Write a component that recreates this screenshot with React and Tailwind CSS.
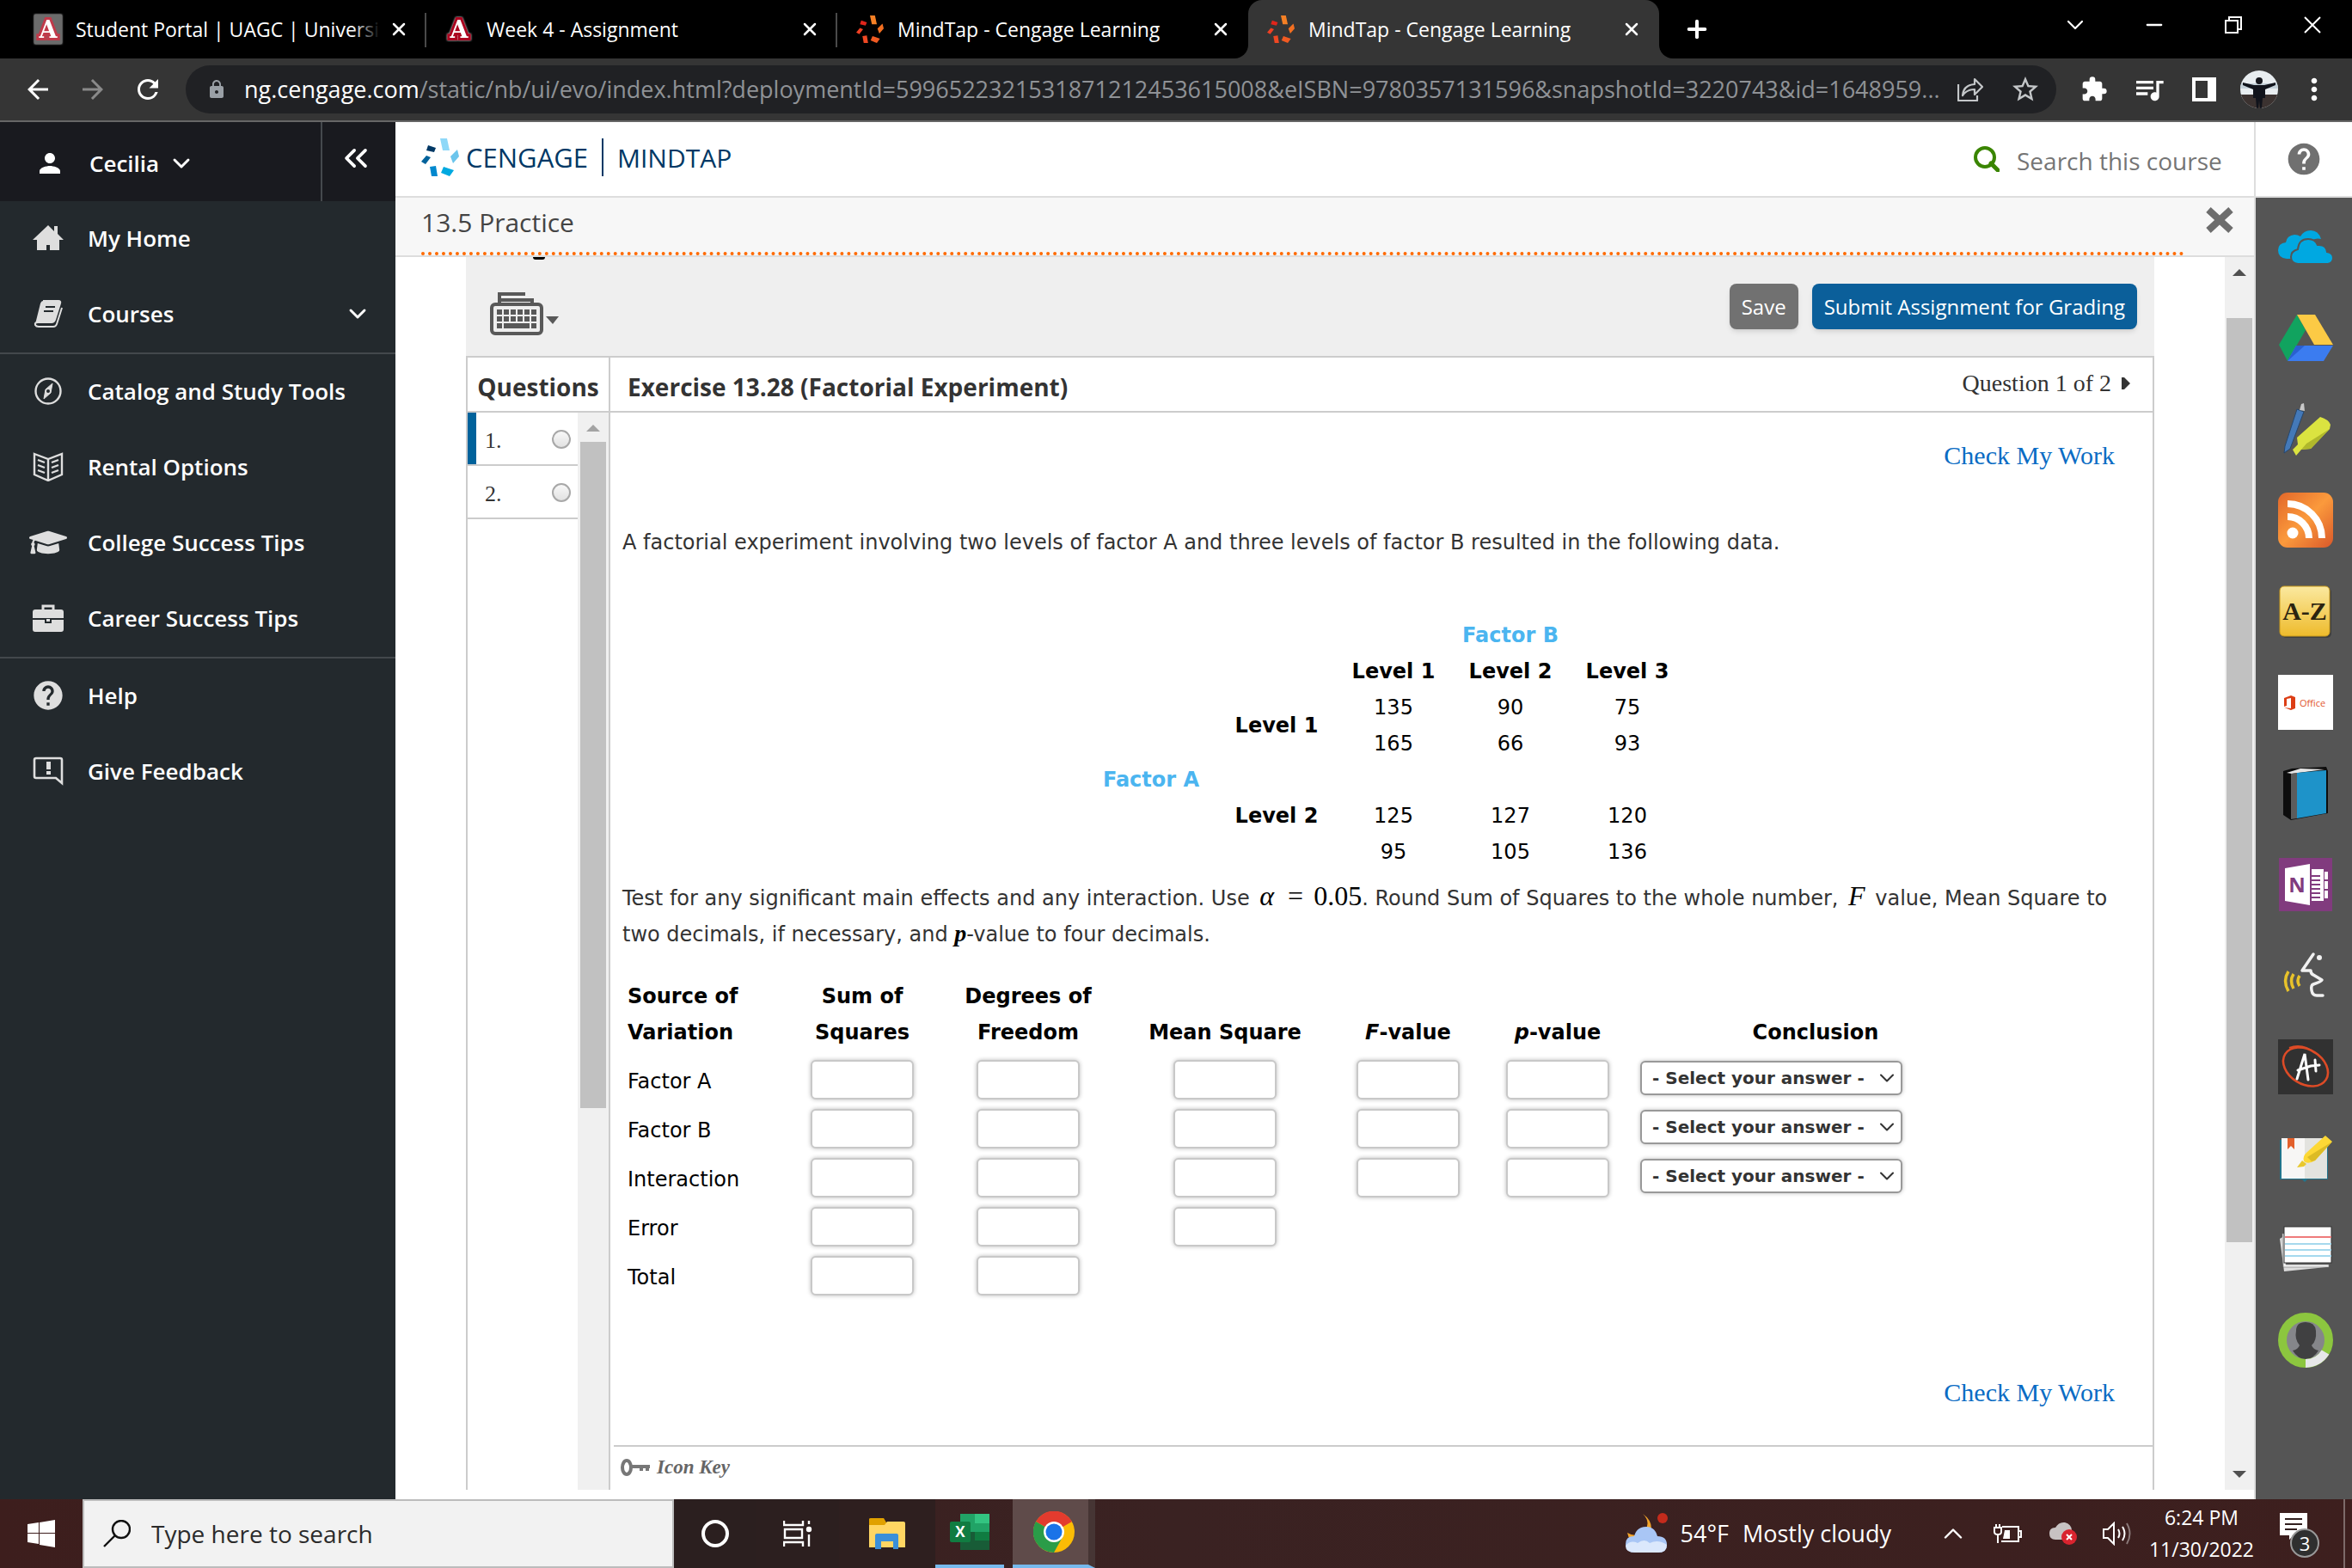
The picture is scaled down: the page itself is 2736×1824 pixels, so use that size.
import React from 'react';
import {
  MdArrowBack, MdArrowForward, MdRefresh, MdLock, MdExtension, MdQueueMusic,
  MdMoreVert, MdPerson, MdHelp, MdStarOutline,
} from 'react-icons/md';
import { FaGraduationCap } from 'react-icons/fa';
import { ChevronDown, ChevronUp, ChevronsLeft, X, Plus, Minus } from 'lucide-react';

/* ---------- Shared logos ---------- */

// Six-piece ring used by the Cengage brand, recoloured for the favicon
const CengageMark = ({ className, colors }) => (
  <svg viewBox="0 0 44 44" className={className} aria-hidden="true">
    <path d="M22 0h8l3 14h-8z" fill={colors[0]} />
    <path d="M34 21l8-8 2 8-7 8z" fill={colors[1]} />
    <path d="M26 33l12 4-5 7-10-4z" fill={colors[2]} />
    <path d="M10 33l7-1 2 12h-7z" fill={colors[3]} />
    <path d="M0 27l6-7 5 2-6 8z" fill={colors[4]} />
    <path d="M8 8l9 3-2 5-9-2z" fill={colors[5]} />
  </svg>
);

const BRAND_BLUE = ['#8ed8f8', '#6cc5ec', '#00a9e0', '#0088ce', '#00629b', '#003865'];
const BRAND_ORANGE = ['#f58025', '#f36f21', '#f05a22', '#ef4823', '#f04023', '#e0251b'];

const ArizonaIcon = ({ dim }) => (
  <svg viewBox="0 0 32 34" className="w-8 h-[34px] shrink-0 drop-shadow-[0_0_1px_white]" aria-hidden="true">
    {dim && <rect width="32" height="34" fill="#6b6b6b" />}
    <text
      x="16"
      y="27"
      textAnchor="middle"
      fontFamily="DejaVu Serif, serif"
      fontWeight="bold"
      fontSize="27"
      fill="#ffffff"
      stroke={dim ? '#c03a4a' : '#ab0520'}
      strokeWidth="6"
      paintOrder="stroke"
    >
      A
    </text>
  </svg>
);

/* ---------- Browser ---------- */

const TABS = [
  { title: 'Student Portal | UAGC | University', icon: 'uagc', dim: true },
  { title: 'Week 4 - Assignment', icon: 'uagc' },
  { title: 'MindTap - Cengage Learning', icon: 'cengage' },
  { title: 'MindTap - Cengage Learning', icon: 'cengage', active: true },
];

const BrowserTab = ({ tab, divider }) => (
  <div
    className={`relative flex items-center w-[478px] h-[68px] pl-[22px] pr-[18px] text-white ${
      tab.active ? 'bg-[#353535] rounded-t-2xl' : ''
    }`}
  >
    {tab.icon === 'uagc' ? (
      <ArizonaIcon dim={tab.dim} />
    ) : (
      <CengageMark className="size-8 shrink-0" colors={BRAND_ORANGE} />
    )}
    <span className="ml-4 flex-1 min-w-0 whitespace-nowrap text-[23px]">{tab.title}</span>
    {tab.dim && (
      <>
        <span className="absolute right-[54px] w-8 h-9 bg-linear-to-r from-transparent to-black" />
        <span className="absolute right-0 w-[54px] h-9 bg-black" />
      </>
    )}
    <button className="relative p-0.5" aria-label="Close tab">
      <X className="size-6" strokeWidth={2.5} />
    </button>
    {divider && <span className="absolute right-0 top-[15px] w-0.5 h-10 bg-[#4a4a4a]" />}
    {tab.active && (
      <>
        <span className="absolute -left-4 bottom-0 size-4 bg-[#353535]"><span className="block size-4 rounded-br-2xl bg-black" /></span>
        <span className="absolute -right-4 bottom-0 size-4 bg-[#353535]"><span className="block size-4 rounded-bl-2xl bg-black" /></span>
      </>
    )}
  </div>
);

const TabStrip = () => (
  <div className="flex h-[68px] bg-black pl-[18px] text-white">
    {TABS.map((tab, i) => (
      <BrowserTab key={i} tab={tab} divider={i < 2} />
    ))}
    <button className="ml-7 self-center" aria-label="New tab">
      <Plus className="size-8" strokeWidth={3} />
    </button>
    <div className="ml-auto flex h-[58px] items-center">
      <button className="w-[92px] flex justify-center" aria-label="Search tabs"><ChevronDown className="size-8" strokeWidth={1.6} /></button>
      <button className="w-[92px] flex justify-center" aria-label="Minimize"><Minus className="size-7" strokeWidth={2} /></button>
      <button className="w-[92px] flex justify-center" aria-label="Restore">
        <svg viewBox="0 0 20 20" className="size-5" fill="none" stroke="currentColor" strokeWidth="2">
          <path d="M1 5h14v14H1zM5 5V1h14v14h-4" />
        </svg>
      </button>
      <button className="w-[92px] flex justify-center" aria-label="Close">
        <svg viewBox="0 0 20 20" className="size-5" stroke="currentColor" strokeWidth="2">
          <path d="M1 1l18 18M19 1L1 19" />
        </svg>
      </button>
    </div>
  </div>
);

const Toolbar = () => (
  <div className="flex items-center h-[74px] bg-[#353535] border-b-2 border-[#666666] pl-3 text-white">
    <button className="w-16 flex justify-center" aria-label="Back"><MdArrowBack className="size-9" /></button>
    <button className="w-16 flex justify-center text-[#8a8a8a]" aria-label="Forward"><MdArrowForward className="size-9" /></button>
    <button className="w-16 flex justify-center" aria-label="Reload"><MdRefresh className="size-9" /></button>
    <div className="ml-3 flex flex-1 min-w-0 items-center h-14 rounded-full bg-[#202124] pl-6 pr-1">
      <MdLock className="size-6 text-[#9aa0a6] shrink-0" />
      <div role="textbox" aria-label="Address" className="ml-5 flex-1 min-w-0 whitespace-nowrap text-[27px] text-[#8f9296]">
        <span className="text-white">ng.cengage.com</span>/static/nb/ui/evo/index.html?deploymentId=5996522321531871212453615008&amp;eISBN=9780357131596&amp;snapshotId=3220743&amp;id=1648959...
      </div>
      <button className="w-16 flex justify-center" aria-label="Share">
        <svg viewBox="0 0 30 28" className="w-[30px] h-7" fill="none" stroke="#c4c7c9" strokeWidth="2.2" strokeLinejoin="round">
          <path d="M1 8v19h22v-6" />
          <path d="M6 21q1-12 14-13V2l9 9-9 9v-6q-9 0-14 7z" />
        </svg>
      </button>
      <button className="w-16 flex justify-center text-[#c4c7c9]" aria-label="Bookmark"><MdStarOutline className="size-9" /></button>
    </div>
    <div className="ml-3 mr-3 flex items-center">
      <button className="w-16 flex justify-center" aria-label="Extensions"><MdExtension className="size-8" /></button>
      <button className="w-16 flex justify-center" aria-label="Media"><MdQueueMusic className="size-10" /></button>
      <button className="w-16 flex justify-center" aria-label="Side panel">
        <svg viewBox="0 0 28 28" className="size-7"><path d="M0 0h28v28H0zM4 4v20h14V4z" fill="#fff" fillRule="evenodd" /></svg>
      </button>
      <button className="w-16 flex justify-center" aria-label="Profile">
        <svg viewBox="0 0 44 44" className="size-11 rounded-full">
          <rect width="44" height="44" fill="#e8edf0" />
          <rect y="15" width="44" height="6" fill="#c3d0d8" />
          <rect y="28" width="44" height="16" fill="#3b3230" />
          <circle cx="22" cy="12" r="4" fill="#14161c" />
          <path d="M3 14l13 3h12l13-3v3l-12 5v10h-3l-1 12h-2l-1-9-1 9h-2l-1-12h-3V22L3 17z" fill="#10131b" />
        </svg>
      </button>
      <button className="w-16 flex justify-center" aria-label="Menu"><MdMoreVert className="size-10" /></button>
    </div>
  </div>
);

/* ---------- Left navigation ---------- */

const IconHome = () => (
  <svg viewBox="0 0 36 32" className="w-9 h-8" fill="#dedede">
    <path d="M18 1l7 7V2h4v9l7 7h-5v12H20v-6h-4v6H5V18H0z" />
  </svg>
);

const IconCourses = () => (
  <svg viewBox="0 0 36 32" className="w-9 h-8">
    <path d="M12 1h18q3 0 2 3l-6 19q-1 3-4 3H6q-4 0-3 3 1 2 4 2h17q3 0 4-3l6-19" fill="none" stroke="#dedede" strokeWidth="2" />
    <path d="M12 1h18q3 0 2 3l-6 19q-1 3-4 3H6q-3 0-3 2L9 4q1-3 3-3z" fill="#dedede" />
    <path d="M15 8h11M13 13h11" stroke="#23292d" strokeWidth="2" />
  </svg>
);

const IconCompass = () => (
  <svg viewBox="0 0 32 32" className="size-8" fill="none" stroke="#dedede">
    <circle cx="16" cy="16" r="14.5" strokeWidth="2.4" />
    <path d="M21 7l-2 11-8 7 2-11z" fill="#dedede" />
    <circle cx="16" cy="16" r="2" fill="#23292d" stroke="none" />
  </svg>
);

const IconOpenBook = () => (
  <svg viewBox="0 0 36 34" className="w-9 h-[34px]" fill="none" stroke="#dedede" strokeWidth="2.4">
    <path d="M2 2l16 6 16-6v24l-16 7-16-7zM18 8v25" />
    <path d="M6 9l8 3M6 15l8 3M6 21l8 3M30 9l-8 3M30 15l-8 3M30 21l-8 3" />
  </svg>
);

const IconBriefcase = () => (
  <svg viewBox="0 0 36 32" className="w-9 h-8">
    <path d="M12 7V2h12v5" fill="none" stroke="#dedede" strokeWidth="3" />
    <path d="M3 6h30q3 0 3 3v7H0V9q0-3 3-3zM0 18h14v4h8v-4h14v11q0 3-3 3H3q-3 0-3-3z" fill="#dedede" />
    <rect x="16" y="17" width="4" height="3" fill="#dedede" />
  </svg>
);

const IconFeedback = () => (
  <svg viewBox="0 0 36 34" className="w-9 h-[34px]">
    <path d="M4 2h28q2 0 2 2v27l-7-6H4q-2 0-2-2V4q0-2 2-2z" fill="none" stroke="#dedede" strokeWidth="2.6" />
    <path d="M16 6h5v9h-5zM16 17h5v4h-5z" fill="#dedede" />
  </svg>
);

const NAV_GROUPS = [
  [
    { label: 'My Home', icon: <IconHome /> },
    { label: 'Courses', icon: <IconCourses />, expandable: true },
  ],
  [
    { label: 'Catalog and Study Tools', icon: <IconCompass /> },
    { label: 'Rental Options', icon: <IconOpenBook /> },
    { label: 'College Success Tips', icon: <FaGraduationCap className="size-11" /> },
    { label: 'Career Success Tips', icon: <IconBriefcase /> },
  ],
  [
    { label: 'Help', icon: <MdHelp className="size-10" /> },
    { label: 'Give Feedback', icon: <IconFeedback /> },
  ],
];

const Sidebar = () => (
  <aside className="w-[460px] shrink-0 bg-[#23292d] text-white text-[26px] font-semibold">
    <div className="flex h-[92px] bg-[#191a1f]">
      <button className="flex flex-1 items-center pl-10 pt-1 border-r-2 border-[#45494d]">
        <MdPerson className="size-9" />
        <span className="ml-7">Cecilia</span>
        <ChevronDown className="ml-2.5 size-8" strokeWidth={2.2} />
      </button>
      <button className="flex w-[85px] items-center justify-center pr-2 pb-2" aria-label="Collapse menu">
        <ChevronsLeft className="size-11" strokeWidth={2} />
      </button>
    </div>
    <nav>
      {NAV_GROUPS.map((group, i) => (
        <ul key={i} className={i > 0 ? 'border-t-2 border-[#43484c]' : ''}>
          {group.map((item) => (
            <li key={item.label}>
              <a href="#" className="flex items-center h-[88px] pr-7 pb-0.5">
                <span className="ml-[34px] w-11 flex justify-center text-[#dedede]">{item.icon}</span>
                <span className="ml-6 flex-1">{item.label}</span>
                {item.expandable && <ChevronDown className="size-8" strokeWidth={2.2} />}
              </a>
            </li>
          ))}
        </ul>
      ))}
    </nav>
  </aside>
);

/* ---------- Course header ---------- */

const CourseHeader = () => (
  <header className="flex h-[88px] bg-white border-b-2 border-[#dddddd]">
    <div className="flex flex-1 items-center pl-[30px] pr-4 pb-1 border-r-2 border-[#dddddd]">
      <CengageMark className="size-11" colors={BRAND_BLUE} />
      <span className="ml-2 text-[31px] text-[#003865]">CENGAGE</span>
      <span className="mx-4 w-0.5 h-11 bg-[#003865]" />
      <span className="text-[30px] text-[#003865]">MINDTAP</span>
      <label className="ml-auto flex items-center pt-1">
        <svg viewBox="0 0 30 30" className="size-[30px]" fill="none" stroke="#3a8500">
          <circle cx="13" cy="13" r="11" strokeWidth="4" />
          <path d="M20 20l8 8" strokeWidth="5" strokeLinecap="round" />
        </svg>
        <input
          type="text"
          aria-label="Search this course"
          placeholder="Search this course"
          className="ml-5 w-[260px] pt-1 text-[28px] placeholder:text-[#757575] outline-none"
        />
      </label>
    </div>
    <button className="flex w-28 items-center justify-center text-[#707070]" aria-label="Help">
      <MdHelp className="size-11" />
    </button>
  </header>
);

/* ---------- Assignment ---------- */

const KeyboardIcon = () => (
  <svg viewBox="0 0 82 52" className="w-[82px] h-[52px]">
    <path d="M11 13V3h30M11 10h38v6" fill="none" stroke="#595959" strokeWidth="4" />
    <rect x="2" y="15" width="58" height="34" rx="4" fill="none" stroke="#595959" strokeWidth="4" />
    {[0, 1, 2, 3, 4, 5].map((c) => (
      <g key={c} fill="#595959">
        <rect x={8 + c * 8} y="21" width="6" height="6" />
        <rect x={8 + c * 8} y="29" width="6" height="6" />
      </g>
    ))}
    <path d="M8 37h6v6H8zM16 37h30v6H16zM48 37h6v6h-6z" fill="#595959" />
    <path d="M65 29h15l-7 9z" fill="#595959" />
  </svg>
);

const QuestionList = () => (
  <div className="flex w-[166px] shrink-0 border-r-2 border-[#cccccc]">
    <ul className="flex-1 font-['Liberation_Serif',serif] text-[26px] text-[#333333]">
      {[1, 2].map((n) => (
        <li
          key={n}
          className={`flex items-center justify-between h-[62px] border-b-2 border-[#cccccc] pr-2 ${
            n === 1 ? 'pl-0' : 'pl-5'
          }`}
        >
          {n === 1 && <span className="w-2.5 self-stretch mr-2.5 bg-[#00629b]" />}
          <label htmlFor={`q${n}`} className="flex-1 pt-1">{n}.</label>
          <input
            id={`q${n}`}
            type="radio"
            name="question"
            className="appearance-none mt-0.5 size-[22px] rounded-full border-2 border-[#a8a8a8] bg-linear-to-b from-[#f8f8f8] to-[#e2e2e2]"
          />
        </li>
      ))}
    </ul>
    <div className="flex flex-col items-center w-9 bg-[#f0f0f0]">
      <svg viewBox="0 0 16 8" className="w-4 h-2 mt-3.5 mb-3"><path d="M0 8l8-8 8 8z" fill="#a3a3a3" /></svg>
      <div className="w-[30px] h-[775px] bg-[#c1c1c1]" />
    </div>
  </div>
);

const FactorTable = () => (
  <table className="mt-[66px] mx-auto w-[700px] table-fixed border-collapse text-center text-black leading-[42px]">
    <colgroup>
      <col className="w-[156px]" />
      <col /><col /><col /><col />
    </colgroup>
    <tbody>
      <tr>
        <td /><td />
        <th colSpan={3} className="p-0 text-[#4bb5f0]">Factor B</th>
      </tr>
      <tr>
        <td /><td />
        <th className="p-0">Level 1</th><th className="p-0">Level 2</th><th className="p-0">Level 3</th>
      </tr>
      <tr>
        <td />
        <th rowSpan={2} className="p-0">Level 1</th>
        <td className="p-0">135</td><td className="p-0">90</td><td className="p-0">75</td>
      </tr>
      <tr>
        <td />
        <td className="p-0">165</td><td className="p-0">66</td><td className="p-0">93</td>
      </tr>
      <tr>
        <th className="p-0 text-[#4bb5f0]">Factor A</th>
        <td colSpan={4} />
      </tr>
      <tr>
        <td />
        <th className="p-0">Level 2</th>
        <td className="p-0">125</td><td className="p-0">127</td><td className="p-0">120</td>
      </tr>
      <tr>
        <td /><td />
        <td className="p-0">95</td><td className="p-0">105</td><td className="p-0">136</td>
      </tr>
    </tbody>
  </table>
);

const ANOVA_ROWS = [
  { source: 'Factor A', inputs: 5, conclusion: true },
  { source: 'Factor B', inputs: 5, conclusion: true },
  { source: 'Interaction', inputs: 5, conclusion: true },
  { source: 'Error', inputs: 3 },
  { source: 'Total', inputs: 2 },
];
const ANOVA_COLUMNS = ['Sum of Squares', 'Degrees of Freedom', 'Mean Square', 'F-value', 'p-value'];

const AnovaTable = () => (
  <table className="mt-[30px] w-[1592px] table-fixed border-collapse text-black">
    <colgroup>
      <col className="w-[180px]" />
      <col className="w-[198px]" />
      <col className="w-[188px]" />
      <col className="w-[270px]" />
      <col className="w-[156px]" />
      <col className="w-[192px]" />
      <col className="w-[408px]" />
    </colgroup>
    <thead>
      <tr className="align-bottom leading-[42px]">
        <th className="p-0 pb-[5px] pl-1.5 text-left">Source of<br />Variation</th>
        <th className="p-0 pb-[5px]">Sum of<br />Squares</th>
        <th className="p-0 pb-[5px]">Degrees of<br />Freedom</th>
        <th className="p-0 pb-[5px]">Mean Square</th>
        <th className="p-0 pb-[5px]"><i>F</i>-value</th>
        <th className="p-0 pb-[5px]"><i>p</i>-value</th>
        <th className="p-0 pb-[5px]">Conclusion</th>
      </tr>
    </thead>
    <tbody>
      {ANOVA_ROWS.map((row) => (
        <tr key={row.source} className="h-[57px]">
          <td className="p-0 pl-1.5 pt-1">{row.source}</td>
          {ANOVA_COLUMNS.map((col, i) => (
            <td key={col} className="p-0 text-center">
              {i < row.inputs && (
                <input
                  type="text"
                  aria-label={`${row.source} ${col}`}
                  className="block mx-auto w-[120px] h-[46px] rounded-md border-2 border-[#c8c8c8] bg-white shadow-[0_0_5px_#bbbbbb]"
                />
              )}
            </td>
          ))}
          <td className="p-0">
            {row.conclusion && (
              <div className="relative w-[305px] mb-1">
                <select
                  aria-label={`${row.source} Conclusion`}
                  className="block appearance-none w-full h-10 rounded-md border-2 border-[#999999] bg-white pl-3 font-bold text-[20px] text-[#333333] shadow-[0_0_5px_#bbbbbb]"
                >
                  <option>- Select your answer -</option>
                </select>
                <ChevronDown className="absolute right-1 top-1.5 size-7 text-[#333333] pointer-events-none" strokeWidth={1.8} />
              </div>
            )}
          </td>
        </tr>
      ))}
    </tbody>
  </table>
);

const CheckMyWork = () => (
  <a href="#" className="mr-[38px] self-end font-['Liberation_Serif',serif] text-[30px] leading-[40px] text-[#0b6cc4]">
    Check My Work
  </a>
);

const Exercise = () => (
  <section className="flex flex-1 flex-col min-w-0 font-['DejaVu_Sans',sans-serif] text-[24px] text-[#333333]">
    <div className="flex flex-col pl-3.5 pr-1.5 pt-[30px]">
      <CheckMyWork />
      <p className="mt-[60px] leading-[42px]">
        A factorial experiment involving two levels of factor A and three levels of factor B resulted in the following data.
      </p>
      <FactorTable />
      <p className="mt-3 pr-8 leading-[42px]">
        Test for any significant main effects and any interaction. Use{' '}
        <span className="font-['Liberation_Serif',serif] text-[32px] leading-none text-black">
          <i className="mx-1">α</i> <span className="mx-1">=</span> 0.05
        </span>
        . Round Sum of Squares to the whole number,{' '}
        <i className="mx-1 font-['Liberation_Serif',serif] text-[32px] leading-none text-black">F</i> value, Mean
        Square to two decimals, if necessary, and{' '}
        <b className="font-['Liberation_Serif',serif] text-[28px] leading-none italic text-black">p</b>-value to four
        decimals.
      </p>
      <AnovaTable />
      <div className="mt-[88px] flex flex-col">
        <CheckMyWork />
      </div>
    </div>
    <footer className="mt-[41px] ml-1 flex flex-1 items-center border-t-2 border-[#cccccc] pl-2 pb-0.5">
      <svg viewBox="0 0 34 22" className="w-[34px] h-[22px]">
        <ellipse cx="7" cy="11" rx="5" ry="8" fill="none" stroke="#777777" strokeWidth="4" />
        <path d="M12 8h22v4H12zM22 12h4v3h-4zM29 12h4v3h-4z" fill="#777777" />
      </svg>
      <a href="#" className="ml-2 font-['Liberation_Serif',serif] font-bold italic text-[23px] text-[#666666]">Icon Key</a>
    </footer>
  </section>
);

const Assignment = () => (
  <div className="flex flex-1 flex-col min-w-0 mx-[82px]">
    <div className="flex justify-between h-[115px] bg-[#efefef] pl-7 pr-5">
      <div>
        {/* descender of the scrolled-off heading */}
        <div className="ml-[50px] w-3.5 h-[3px] rounded-b-full bg-black" />
        <button className="mt-[37px]" aria-label="Keyboard navigation"><KeyboardIcon /></button>
      </div>
      <div className="flex gap-4 mt-[31px] text-white text-[24px]">
        <button className="h-[53px] px-3.5 rounded-lg bg-[#717171] shadow-md">Save</button>
        <button className="h-[53px] px-3.5 rounded-lg bg-[#0b5f9a] shadow-md">Submit Assignment for Grading</button>
      </div>
    </div>
    <div className="flex flex-1 flex-col border-2 border-b-0 border-[#cccccc]">
      <div className="flex h-16 border-b-2 border-[#cccccc] text-[28px] text-[#333333]">
        <h2 className="flex w-[166px] items-center justify-center border-r-2 border-[#cccccc] pt-1.5 font-bold">Questions</h2>
        <div className="flex flex-1 items-center justify-between pl-5 pr-[26px]">
          <h1 className="pt-1.5 font-bold">Exercise 13.28 (Factorial Experiment)</h1>
          <button className="flex items-center gap-3 pb-0.5 font-['Liberation_Serif',serif]">
            Question 1 of 2
            <svg viewBox="0 0 10 14" className="w-2.5 h-3.5"><path d="M0 0h3l7 7-7 7H0z" fill="#333333" /></svg>
          </button>
        </div>
      </div>
      <div className="flex flex-1">
        <QuestionList />
        <Exercise />
      </div>
    </div>
  </div>
);

const PageScrollbar = () => (
  <div className="flex flex-col items-center w-[34px] bg-[#f0f0f0] text-[#505050]">
    <svg viewBox="0 0 16 8" className="w-4 h-2 mt-3.5"><path d="M0 8l8-8 8 8z" fill="currentColor" /></svg>
    <div className="mt-[49px] w-[30px] h-[1075px] bg-[#c1c1c1]" />
    <svg viewBox="0 0 16 8" className="w-4 h-2 mt-auto mb-3.5"><path d="M0 0l8 8 8-8z" fill="currentColor" /></svg>
  </div>
);

/* ---------- Right tool rail ---------- */

const RAIL_ICONS = [
  {
    label: 'OneDrive',
    art: (
      <>
        <path d="M10 46q-10-1-10-10 0-8 9-9 1-8 10-9 4 0 7 2 4-7 12-7 9 0 12 10-4-1-7 0-7 1-10 8-9 1-11 8-4 3-2 7z" fill="#00a8e1" />
        <path d="M23 52q-8-1-8-8t8-9q1-12 12-12 8 0 11 7 10-1 11 8 7 1 7 7 0 6-6 7z" fill="#00a8e1" stroke="#555555" strokeWidth="2" />
      </>
    ),
  },
  {
    label: 'Google Drive',
    art: (
      <>
        <path d="M22 5L1 40l10 19 21-36z" fill="#11a35f" />
        <path d="M22 5h21l21 35H42z" fill="#fcca45" />
        <path d="M21 41h43L53 59H11z" fill="#3b7cf0" />
        <path d="M11 59l10-18h10z" fill="#2a60cf" />
      </>
    ),
  },
  {
    label: 'Highlighter',
    art: (
      <>
        <path d="M22 9l8 3L14 55l-7 5 1-8z" fill="#4479b8" stroke="#27476d" strokeWidth="1" />
        <path d="M25 10l2-7 3-1 1 9z" fill="#c8c8c8" />
        <path d="M49 18q10 3 12 9l-1 5-22 23-11 1-6 7-4-7 6-6-1-8z" fill="#dbe340" />
        <path d="M60 32L38 55l-11 1 6-7z" fill="#b0b82b" />
      </>
    ),
  },
  {
    label: 'RSS',
    art: (
      <>
        <defs>
          <linearGradient id="rss" x1="0" y1="0" x2="1" y2="1">
            <stop offset="0" stopColor="#e2672a" /><stop offset=".5" stopColor="#fb9a3c" /><stop offset="1" stopColor="#d9582a" />
          </linearGradient>
        </defs>
        <rect width="64" height="64" rx="11" fill="url(#rss)" />
        <circle cx="17" cy="47" r="6.5" fill="#fff" />
        <path d="M11 28a25 25 0 0 1 25 25M11 13a40 40 0 0 1 40 40" fill="none" stroke="#fff" strokeWidth="8" />
      </>
    ),
  },
  {
    label: 'Glossary',
    art: (
      <>
        <defs>
          <linearGradient id="az" x1="0" y1="0" x2="0" y2="1"><stop offset="0" stopColor="#fbe9a0" /><stop offset="1" stopColor="#eebb2c" /></linearGradient>
        </defs>
        <rect x="4" y="5" width="58" height="58" rx="5" fill="#3f3f3f" />
        <rect x="2" y="3" width="58" height="58" rx="5" fill="url(#az)" stroke="#c99a1c" />
        <text x="31" y="42" textAnchor="middle" fontFamily="Liberation Serif, serif" fontWeight="bold" fontSize="30" fill="#2b2410">A-Z</text>
      </>
    ),
  },
  {
    label: 'Office',
    art: (
      <>
        <rect width="64" height="64" fill="#fff" />
        <path d="M7 27l8-3 5 2v13l-5 2-8-3 8 1V27l-5 1v8l-3 1z" fill="#dc3e15" />
        <text x="25" y="37" fontFamily="Open Sans, sans-serif" fontSize="11" fill="#e2582f">Office</text>
      </>
    ),
  },
  {
    label: 'Book',
    art: (
      <>
        <path d="M6 6l10-3 40-2 2 5v49l-43 8-9-6z" fill="#0d0d0d" />
        <path d="M10 8l16-5 28 1-38 5z" fill="#e6e6e6" />
        <path d="M15 9l7-1v53l-7 1z" fill="#5c5c5c" />
        <path d="M22 8l34-3v50l-34 6z" fill="#1e93c9" />
      </>
    ),
  },
  {
    label: 'OneNote',
    art: (
      <>
        <rect x="1" y="1" width="62" height="62" fill="#813b7e" />
        <path d="M8 13l29-5v48L8 51z" fill="#fff" />
        <path d="M39 14h14v37H39v-3h10v-2H39v-3h10v-2H39v-3h10v-2H39v-3h10v-2H39v-3h10v-2H39v-3h10v-2H39z" fill="#fff" />
        <path d="M54 17h4v9h-4zM54 28h4v9h-4zM54 39h4v9h-4z" fill="#fff" />
        <text x="22" y="41" textAnchor="middle" fontFamily="Open Sans, sans-serif" fontWeight="bold" fontSize="24" fill="#813b7e">N</text>
      </>
    ),
  },
  {
    label: 'Read aloud',
    art: (
      <>
        <path d="M41 7L28 26h10q0 4 3 5l10 6q-1 2-10 5-3 1-2 7 1 6 6 6h7" fill="none" stroke="#f1f1f1" strokeWidth="3.5" strokeLinejoin="round" strokeLinecap="round" />
        <circle cx="48" cy="11" r="3" fill="#f1f1f1" />
        <path d="M12 27q-7 11 0 23M18 30q-5 8 0 17M25 32q-4 6 0 12" fill="none" stroke="#e8c22a" strokeWidth="3.5" />
      </>
    ),
  },
  {
    label: 'Grades',
    art: (
      <>
        <rect width="64" height="64" fill="#313131" />
        <ellipse cx="32" cy="32" rx="28" ry="20" transform="rotate(32 32 32)" fill="none" stroke="#dd4b26" strokeWidth="2.6" />
        <path d="M13 10q15-6 30 6" fill="none" stroke="#dd4b26" strokeWidth="2" />
        <path d="M22 46l9-29 4 30M23 36l15-5M43 24l1 13M38 31l10-1" fill="none" stroke="#fff" strokeWidth="3" strokeLinecap="round" />
      </>
    ),
  },
  {
    label: 'Notebook',
    art: (
      <>
        <path d="M2 11h56v46H34l-3 3-3-3H2z" fill="#22748c" />
        <path d="M4 9h27v47H4z" fill="#f7f6f5" /><path d="M31 9h26v47H31z" fill="#e3e3df" />
        <path d="M11 9h8v13l-4-4-4 4z" fill="#e2602b" />
        <path d="M55 6l8 7-20 22q-8 5-13 1-2-6 4-11z" fill="#fdd835" />
        <path d="M63 13L43 35l-4 1-5-5z" fill="#dcbb25" />
        <path d="M28 35l5 4-3 3-8 1z" fill="#e8c82e" />
      </>
    ),
  },
  {
    label: 'Flashcards',
    art: (
      <>
        <path d="M2 20l5-3v36l49-3v3L7 58z" fill="#dcdcdc" />
        <path d="M5 14h4v36h50v3H6z" fill="#f1f1f1" stroke="#777777" strokeWidth=".6" />
        <rect x="7" y="6" width="55" height="42" fill="#fff" stroke="#333" strokeWidth="1" />
        <path d="M8 18h54" stroke="#ef7b7b" strokeWidth="2" />
        <path d="M8 26h54M8 33h54M8 40h54" stroke="#a5d9ee" strokeWidth="2" />
      </>
    ),
  },
  {
    label: 'Progress',
    art: (
      <>
        <circle cx="32" cy="32" r="23" fill="#85868a" />
        <path d="M21 21q0-10 11-10t12 10q1 12-5 17 2 5 8 6-6 10-15 10t-15-10q6-1 8-6-6-7-4-17z" fill="#404041" />
        <circle cx="32" cy="32" r="27" fill="none" stroke="#8cc63f" strokeWidth="10" />
        <path d="M32 59a27 27 0 0 0 23-13" fill="none" stroke="#e6e7e8" strokeWidth="10" />
      </>
    ),
  },
];

const ToolRail = () => (
  <aside className="w-28 shrink-0 bg-[#555555] pt-1 pl-1">
    {RAIL_ICONS.map((icon) => (
      <button key={icon.label} aria-label={icon.label} className="flex w-full h-[106px] items-center justify-center">
        <svg viewBox="0 0 64 64" className="size-16">{icon.art}</svg>
      </button>
    ))}
  </aside>
);

const CourseArea = () => (
  <main className="flex flex-1 flex-col min-w-0 bg-white">
    <CourseHeader />
    <div className="flex flex-1">
      <div className="flex flex-1 flex-col min-w-0 border-r-2 border-[#dddddd]">
        <div className="flex h-[69px] bg-[#f7f7f7] border-b-2 border-[#dddddd] pl-[30px]">
          <h2 className="flex-1 border-b-4 border-dotted border-[#ff6a00] text-[30px] leading-[58px] text-[#444444]">13.5 Practice</h2>
          <button className="flex w-[80px] justify-center pt-1.5 text-[#6d6d6d]" aria-label="Close activity">
            <svg viewBox="0 0 32 32" className="size-8 mt-1" stroke="currentColor" strokeWidth="8">
              <path d="M3 4l26 24M29 4L3 28" />
            </svg>
          </button>
        </div>
        <div className="flex flex-1 mb-[11px]">
          <Assignment />
          <PageScrollbar />
        </div>
      </div>
      <ToolRail />
    </div>
  </main>
);

/* ---------- Taskbar ---------- */

const Taskbar = () => (
  <footer className="flex h-20 bg-linear-to-r from-[#3d1e1d] via-[#3a2222] to-[#3d1f1e] text-white">
    <button className="flex w-24 items-center justify-center" aria-label="Start">
      <svg viewBox="0 0 32 32" className="size-8" fill="#fff">
        <path d="M0 5l13-2v12H0zM14 3l18-3v15H14zM0 16h13v12L0 26zM14 16h18v16l-18-3z" />
      </svg>
    </button>
    <label className="flex w-[688px] items-center border-2 border-[#bcbcbc] bg-[#f2f2f2] pl-[22px]">
      <svg viewBox="0 0 32 32" className="size-8" fill="none" stroke="#111" strokeWidth="2.4">
        <circle cx="21" cy="11" r="10" /><path d="M14 18L1 31" />
      </svg>
      <input type="text" aria-label="Type here to search" placeholder="Type here to search" className="ml-6 flex-1 text-[28px] placeholder:text-[#2b2b2b] outline-none" />
    </label>
    <button className="flex w-24 items-center justify-center bg-[#2b1f1f]" aria-label="Cortana">
      <span className="size-8 rounded-full border-4 border-white" />
    </button>
    <button className="flex w-24 items-center justify-center bg-[#2c1f1f]" aria-label="Task view">
      <svg viewBox="0 0 34 32" className="w-[34px] h-8" fill="none" stroke="#fff" strokeWidth="2.4">
        <path d="M1 1v5h22V1M1 31v-5h22v5M2 11h20v10H2zM30 1v4M30 17v14" /><circle cx="30" cy="11" r="2" fill="#fff" />
      </svg>
    </button>
    <button className="flex w-28 items-center justify-center bg-[#2e1f1f]" aria-label="File Explorer">
      <svg viewBox="0 0 42 36" className="w-[42px] h-9">
        <path d="M0 1q0-1 2-1h15l3 5h20q2 0 2 2v27H0z" fill="#e0a100" />
        <path d="M0 8h18l3-4h19q2 0 2 2v28H0z" fill="#ffd663" />
        <path d="M7 36V20q0-2 2-2h23q2 0 2 2v16h-6v-9H14v9z" fill="#3a8fd9" />
      </svg>
    </button>
    <button className="flex w-20 items-center justify-center mr-2.5 border-b-4 border-[#76b9ed]" aria-label="Excel">
      <svg viewBox="0 0 46 42" className="w-[46px] h-[42px]">
        <path d="M12 0h17v21H12z" fill="#21a366" /><path d="M29 0h17v11H29z" fill="#33c481" />
        <path d="M29 11h17v10H29z" fill="#21a366" /><path d="M12 21h34v21H12z" fill="#185c37" /><path d="M29 21h17v10H29z" fill="#107c41" />
        <rect y="9" width="24" height="24" rx="2" fill="#107c41" />
        <text x="12" y="27" textAnchor="middle" fontFamily="Open Sans, sans-serif" fontWeight="bold" fontSize="17" fill="#fff">X</text>
      </svg>
    </button>
    <button className="flex w-24 items-center justify-center pl-2 bg-[#5f4b4a] border-r-8 border-r-[#463534] border-b-4 border-b-[#76b9ed]" aria-label="Chrome">
      <svg viewBox="0 0 48 48" className="size-12">
        <circle cx="24" cy="24" r="24" fill="#fbbc05" />
        <path d="M24 24L3 12A24 24 0 0 1 45 12z" fill="#e33b2e" />
        <path d="M24 24L3 12A24 24 0 0 0 24 48l10-18z" fill="#2a9c48" />
        <circle cx="24" cy="24" r="12" fill="#fff" /><circle cx="24" cy="24" r="9.5" fill="#1a73e8" />
      </svg>
    </button>
    <div className="ml-auto flex items-center">
      <svg viewBox="0 0 50 48" className="w-[50px] h-12">
        <path d="M20 1q10 10 2 20-8 9-20 2 2 12 14 11 14-2 14-16 0-10-10-17z" fill="#f3a52b" />
        <path d="M11 46q-11 0-11-10 0-9 10-9 3-11 14-11 10 0 13 11 11 0 11 10 0 9-10 9z" fill="#a9c6f5" />
        <path d="M11 46q-11 0-11-8 6-7 14-3 8-6 14 0 10-5 20 2 0 9-10 9z" fill="#dbe8fc" />
        <circle cx="43" cy="6" r="6" fill="#c42b1c" />
      </svg>
      <span className="ml-3.5 text-[27px]">54°F</span>
      <span className="ml-4 text-[27px]">Mostly cloudy</span>
      <button className="ml-[54px]" aria-label="Show hidden icons"><ChevronUp className="size-9" strokeWidth={1.6} /></button>
      <svg viewBox="0 0 34 24" className="ml-7 w-[34px] h-6" fill="none" stroke="#fff" strokeWidth="2">
        <path d="M11 4h19v17H10M30 9h3v7h-3M2 5h8v5q0 3-4 3t-4-3zM4 5V1M8 5V1M6 13v10" /><path d="M14 8h6v10h-8z" fill="#fff" stroke="none" />
      </svg>
      <svg viewBox="0 0 34 28" className="ml-8 w-[34px] h-7">
        <path d="M7 21q-7 0-7-7t7-7q4-7 11-6 8 2 8 10v10z" fill="#c7c2c2" />
        <circle cx="23" cy="18" r="9" fill="#d9242f" /><path d="M20 15l6 6M26 15l-6 6" stroke="#fff" strokeWidth="2" />
      </svg>
      <svg viewBox="0 0 34 28" className="ml-7 w-[34px] h-7" fill="none" stroke="#fff" strokeWidth="2">
        <path d="M1 9h5l7-7v24l-7-7H1zM18 9q3 5 0 10M23 6q5 8 0 16" /><path d="M28 2q7 12 0 24" stroke="#8b7a7a" />
      </svg>
      <div className="ml-5 text-center text-[23px] leading-[37px]">
        <div>6:24 PM</div>
        <div>11/30/2022</div>
      </div>
      <button className="relative ml-[30px] mr-[26px] w-12 h-14" aria-label="Notifications">
        <svg viewBox="0 0 48 56" className="w-12 h-14">
          <path d="M0 4h32v26H16l-5 5v-5H0z" fill="#fff" />
          <path d="M6 11h20M6 17h20M6 23h14" stroke="#33201f" strokeWidth="2" />
        </svg>
        <span className="absolute left-3 bottom-0 size-[34px] rounded-full border-2 border-[#999999] bg-[#2f2f2f] text-[22px] leading-[30px]">3</span>
      </button>
      <span className="w-0.5 h-20 mr-2 bg-[#7d6a69]" />
    </div>
  </footer>
);

export default function App() {
  return (
    <div className="flex min-h-screen flex-col overflow-hidden bg-white font-['Open_Sans','Noto_Sans',sans-serif]">
      <TabStrip />
      <Toolbar />
      <div className="flex flex-1">
        <Sidebar />
        <CourseArea />
      </div>
      <Taskbar />
    </div>
  );
}
